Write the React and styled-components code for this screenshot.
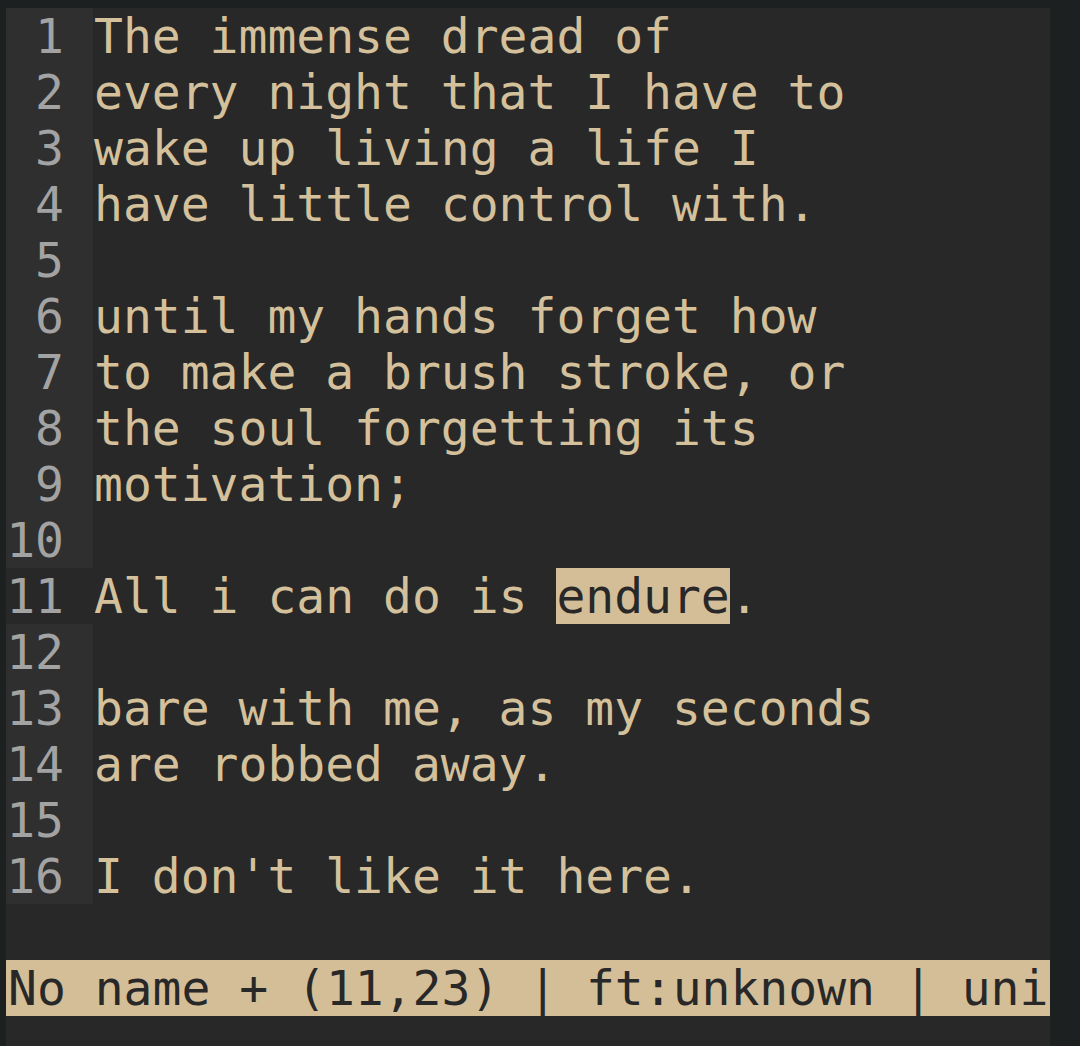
import React from 'react'
import styled, { createGlobalStyle } from 'styled-components'

const GlobalStyle = createGlobalStyle`
  html, body {
    margin: 0;
    padding: 0;
    background: #1d2021;
    height: 100%;
    overflow: hidden;
  }
`

const Page = styled.div`
  height: 1046px;
  padding: 8px 30px 0 6px;
  box-sizing: border-box;
  background: #1d2021;
`

const Editor = styled.div`
  height: 100%;
  background: #282828;
  font-family: 'DejaVu Sans Mono', 'Liberation Mono', monospace;
  font-size: 48px;
  line-height: 56px;
  color: #d4c19c;
  display: flex;
  flex-direction: column;
`

const Row = styled.div`
  display: flex;
  height: 56px;
  white-space: pre;
`

const Gutter = styled.div`
  width: 87px;
  flex: none;
  box-sizing: border-box;
  padding-right: 29px;
  text-align: right;
  color: #a3a3a3;
  background: ${(p) => (p.$current ? '#282828' : '#2f2f2f')};
`

const Code = styled.div`
  flex: 1;
  padding-left: 1px;
`

const Mark = styled.span`
  background: #d4be98;
  color: #282828;
`

const Spacer = styled.div`
  height: 56px;
`

const StatusBar = styled.div`
  height: 56px;
  background: #d4be98;
  color: #282828;
  white-space: pre;
  overflow: hidden;
  padding-left: 2px;
`

const lines = [
  'The immense dread of',
  'every night that I have to',
  'wake up living a life I',
  'have little control with.',
  '',
  'until my hands forget how',
  'to make a brush stroke, or',
  'the soul forgetting its',
  'motivation;',
  '',
  null,
  '',
  'bare with me, as my seconds',
  'are robbed away.',
  '',
  "I don't like it here.",
]

export default function App() {
  return (
    <>
      <GlobalStyle />
      <Page>
        <Editor>
          {lines.map((line, i) => (
            <Row key={i}>
              <Gutter $current={i === 10}>{i + 1}</Gutter>
              <Code>
                {line === null ? (
                  <>
                    All i can do is <Mark>endure</Mark>.
                  </>
                ) : (
                  line
                )}
              </Code>
            </Row>
          ))}
          <Spacer />
          <StatusBar>No name + (11,23) | ft:unknown | uni</StatusBar>
        </Editor>
      </Page>
    </>
  )
}
